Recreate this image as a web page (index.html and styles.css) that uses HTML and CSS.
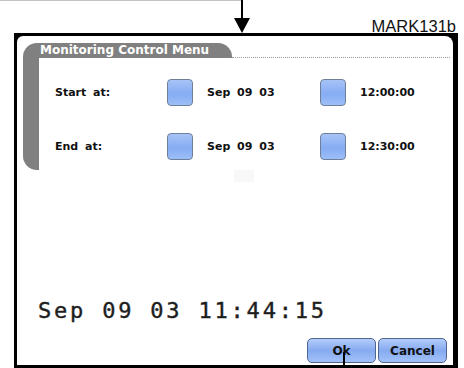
FILE: index.html
```html
<!DOCTYPE html>
<html>
  <head>
    <meta charset="UTF-8">
    <title>Monitoring Control Menu</title>
    <link rel="stylesheet" href="styles.css">
  </head>
  <body>
    <div class="top">
      <svg class="pointer" width="260" height="33" viewBox="0 0 260 33">
        <rect x="0" y="0" width="242" height="1" fill="#c4c4c4"/>
        <rect x="241" y="0" width="2" height="19" fill="#000"/>
        <polygon points="234,18 250,18 242,33" fill="#000"/>
      </svg>
      <span class="tag">MARK131b</span>
    </div>

    <div class="frame">
      <div class="screen">
        <div class="menu-head">
          <div class="tab">Monitoring Control Menu</div>
          <div class="dots"></div>
        </div>

        <div class="menu-body">
          <div class="row">
            <span class="label">Start at:</span>
            <span class="key"></span>
            <span class="value">Sep 09 03</span>
            <span class="key"></span>
            <span class="value">12:00:00</span>
          </div>
          <div class="row">
            <span class="label">End at:</span>
            <span class="key"></span>
            <span class="value">Sep 09 03</span>
            <span class="key"></span>
            <span class="value">12:30:00</span>
          </div>
        </div>
        <div class="ghost"></div>

        <div class="clock">Sep 09 03 11:44:15</div>

        <div class="buttons">
          <button type="button" class="btn">Ok</button>
          <button type="button" class="btn">Cancel</button>
        </div>
      </div>
      <div class="callout"></div>
    </div>
  </body>
</html>
```

FILE: styles.css
```css
body {
  margin: 0;
  width: 464px;
  height: 368px;
  overflow: hidden;
  background-color: #ffffff;
  font-family: "DejaVu Sans", Verdana, sans-serif;
}
.top {
  display: flex;
  justify-content: space-between;
  height: 33px;
}
.pointer {
  display: block;
}
.tag {
  font-family: "Liberation Sans", Arial, sans-serif;
  font-size: 16.5px;
  line-height: 17px;
  padding-top: 18px;
  padding-right: 8px;
  color: #111111;
}
.frame {
  position: relative;
  box-sizing: border-box;
  margin-left: 14px;
  width: 444px;
  height: 335px;
  padding: 3px 5px 3px 3px;
  background-color: #000000;
}
.screen {
  display: flex;
  flex-direction: column;
  height: 100%;
  background-color: #ffffff;
  border-radius: 6px 8px 0 0;
}
.menu-head {
  display: flex;
  align-items: flex-end;
  margin: 7px 3px 0 6px;
}
.tab {
  width: 192px;
  height: 15px;
  padding-left: 17px;
  background-color: #808080;
  border-radius: 14px 14px 0 0;
  color: #ffffff;
  font-size: 12px;
  font-weight: bold;
  line-height: 15px;
  white-space: nowrap;
}
.dots {
  flex: 1;
  border-bottom: 1px dotted #9a9a9a;
}
.menu-body {
  display: flex;
  flex-direction: column;
  gap: 27px;
  height: 112px;
  box-sizing: border-box;
  margin-left: 6px;
  padding: 21px 0 0 16px;
  border-left: 16px solid #808080;
  border-bottom-left-radius: 14px;
}
.row {
  display: grid;
  grid-template-columns: 112px 26px 127px 26px auto;
  align-items: center;
  height: 27px;
}
.label, .value {
  font-size: 11px;
  font-weight: bold;
  color: #111111;
  word-spacing: 3px;
}
.value {
  padding-left: 14px;
}
.key {
  box-sizing: border-box;
  width: 26px;
  height: 27px;
  border: 1px solid #6f7f99;
  border-radius: 4px;
  background: linear-gradient(#a7c4f8, #86acf2 55%, #9cbff8);
}
.ghost {
  width: 20px;
  height: 12px;
  margin-left: 217px;
  background-color: #f8f8f8;
}
.clock {
  margin: auto 0 16px 21px;
  font-family: "DejaVu Sans Mono", monospace;
  font-size: 22px;
  line-height: 22px;
  letter-spacing: 2.8px;
  color: #1e1e1e;
  -webkit-text-stroke: 0.4px #1e1e1e;
  white-space: pre;
}
.buttons {
  display: flex;
  justify-content: flex-end;
  gap: 2px;
  margin: 0 6px 2px 0;
}
.btn {
  box-sizing: border-box;
  width: 69px;
  height: 25px;
  padding: 0;
  border: 1px solid #4f6690;
  border-radius: 5px;
  background: linear-gradient(#b3cdfa, #86aaf0 50%, #a2c2f9);
  font-family: "DejaVu Sans", Verdana, sans-serif;
  font-size: 12px;
  font-weight: bold;
  color: #111111;
}
.callout {
  position: absolute;
  left: 329px;
  top: 319px;
  width: 2px;
  height: 18px;
  background-color: #000000;
}
```
